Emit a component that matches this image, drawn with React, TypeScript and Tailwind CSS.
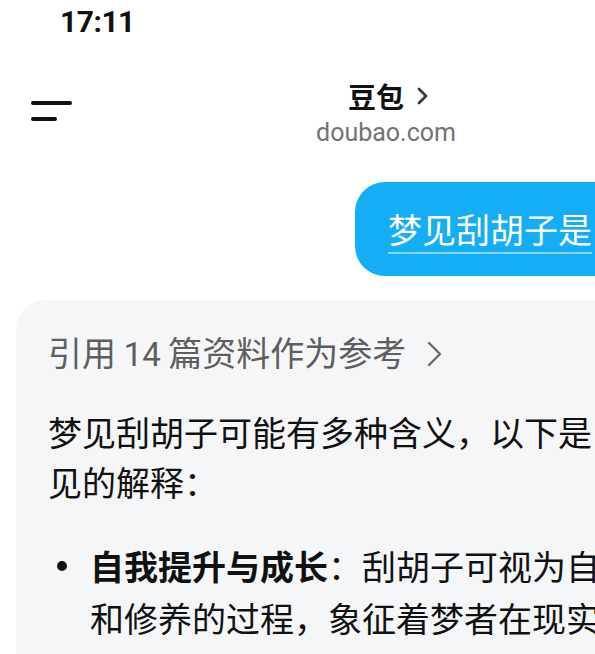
export default function App() {
  return (
    <div className="w-[595px] h-[654px] overflow-hidden bg-white text-[#111] font-['Roboto','Noto_Sans_CJK_SC',sans-serif]">
      {/* Status bar */}
      <div className="h-[44px] pl-[60px] text-[30px] font-bold leading-[44px] tracking-[-0.5px]">17:11</div>

      {/* Header */}
      <header className="mt-[33px] w-[772px] grid grid-cols-[1fr_auto_1fr]">
        <div className="pl-[31px] pt-[22px]">
          <svg width="44" height="24" viewBox="0 0 44 24" fill="none" stroke="#111" strokeWidth="4" strokeLinecap="round">
            <path d="M2 4H39" />
            <path d="M2 20H24" />
          </svg>
        </div>
        <div className="flex flex-col items-center">
          <div className="flex items-center pl-[6px] h-[38px]">
            <span className="text-[28px] font-bold leading-[38px] font-['Noto_Sans_CJK_SC',sans-serif]">豆包</span>
            <svg className="ml-[12px]" width="14" height="18" viewBox="0 0 14 18" fill="none" stroke="#3a3a3a" strokeWidth="2.8" strokeLinecap="round" strokeLinejoin="round">
              <path d="M3 2L10 9L3 16" />
            </svg>
          </div>
          <div className="text-[25px] leading-[36px] text-[#737373]">doubao.com</div>
        </div>
        <div />
      </header>

      {/* User bubble */}
      <div className="mt-[31px] pl-[355px]">
        <div className="inline-block whitespace-nowrap rounded-[30px] bg-[#15adf6] pl-[33px] pr-[80px] py-[22px] text-white text-[34px] leading-[50px] font-['Noto_Sans_CJK_SC',sans-serif]">
          <span className="underline decoration-white/50 decoration-[1.5px] underline-offset-[9px]">梦见刮胡子是</span>
        </div>
      </div>

      {/* Answer card */}
      <div className="mt-[24px] ml-[16px] w-[700px] h-[400px] rounded-tl-[30px] bg-[#f5f6f8] pl-[32px] pt-[27px] font-['Noto_Sans_CJK_SC',sans-serif]">
        <div className="flex items-center whitespace-nowrap text-[34px] leading-[50px] text-[#5e5e5e]">
          <span>引用 <span className="font-['Roboto',sans-serif] text-[33px]">14</span> 篇资料作为参考</span>
          <svg className="ml-[20px]" width="17" height="26" viewBox="0 0 17 26" fill="none" stroke="#6a6a6a" strokeWidth="2.4" strokeLinecap="round" strokeLinejoin="round">
            <path d="M3 2L14 13L3 24" />
          </svg>
        </div>

        <div className="mt-[27px] text-[34px] leading-[50px] whitespace-nowrap">
          <div>梦见刮胡子可能有多种含义，以下是</div>
          <div>见的解释：</div>
        </div>

        <div className="mt-[33px] flex text-[34px] leading-[52px] whitespace-nowrap">
          <div className="w-[42px] h-[52px] flex items-center pl-[9px]">
            <span className="block w-[10px] h-[10px] rounded-full bg-[#111]" />
          </div>
          <div>
            <div><span className="font-bold">自我提升与成长</span>：刮胡子可视为自</div>
            <div>和修养的过程，象征着梦者在现实</div>
          </div>
        </div>
      </div>
    </div>
  )
}
